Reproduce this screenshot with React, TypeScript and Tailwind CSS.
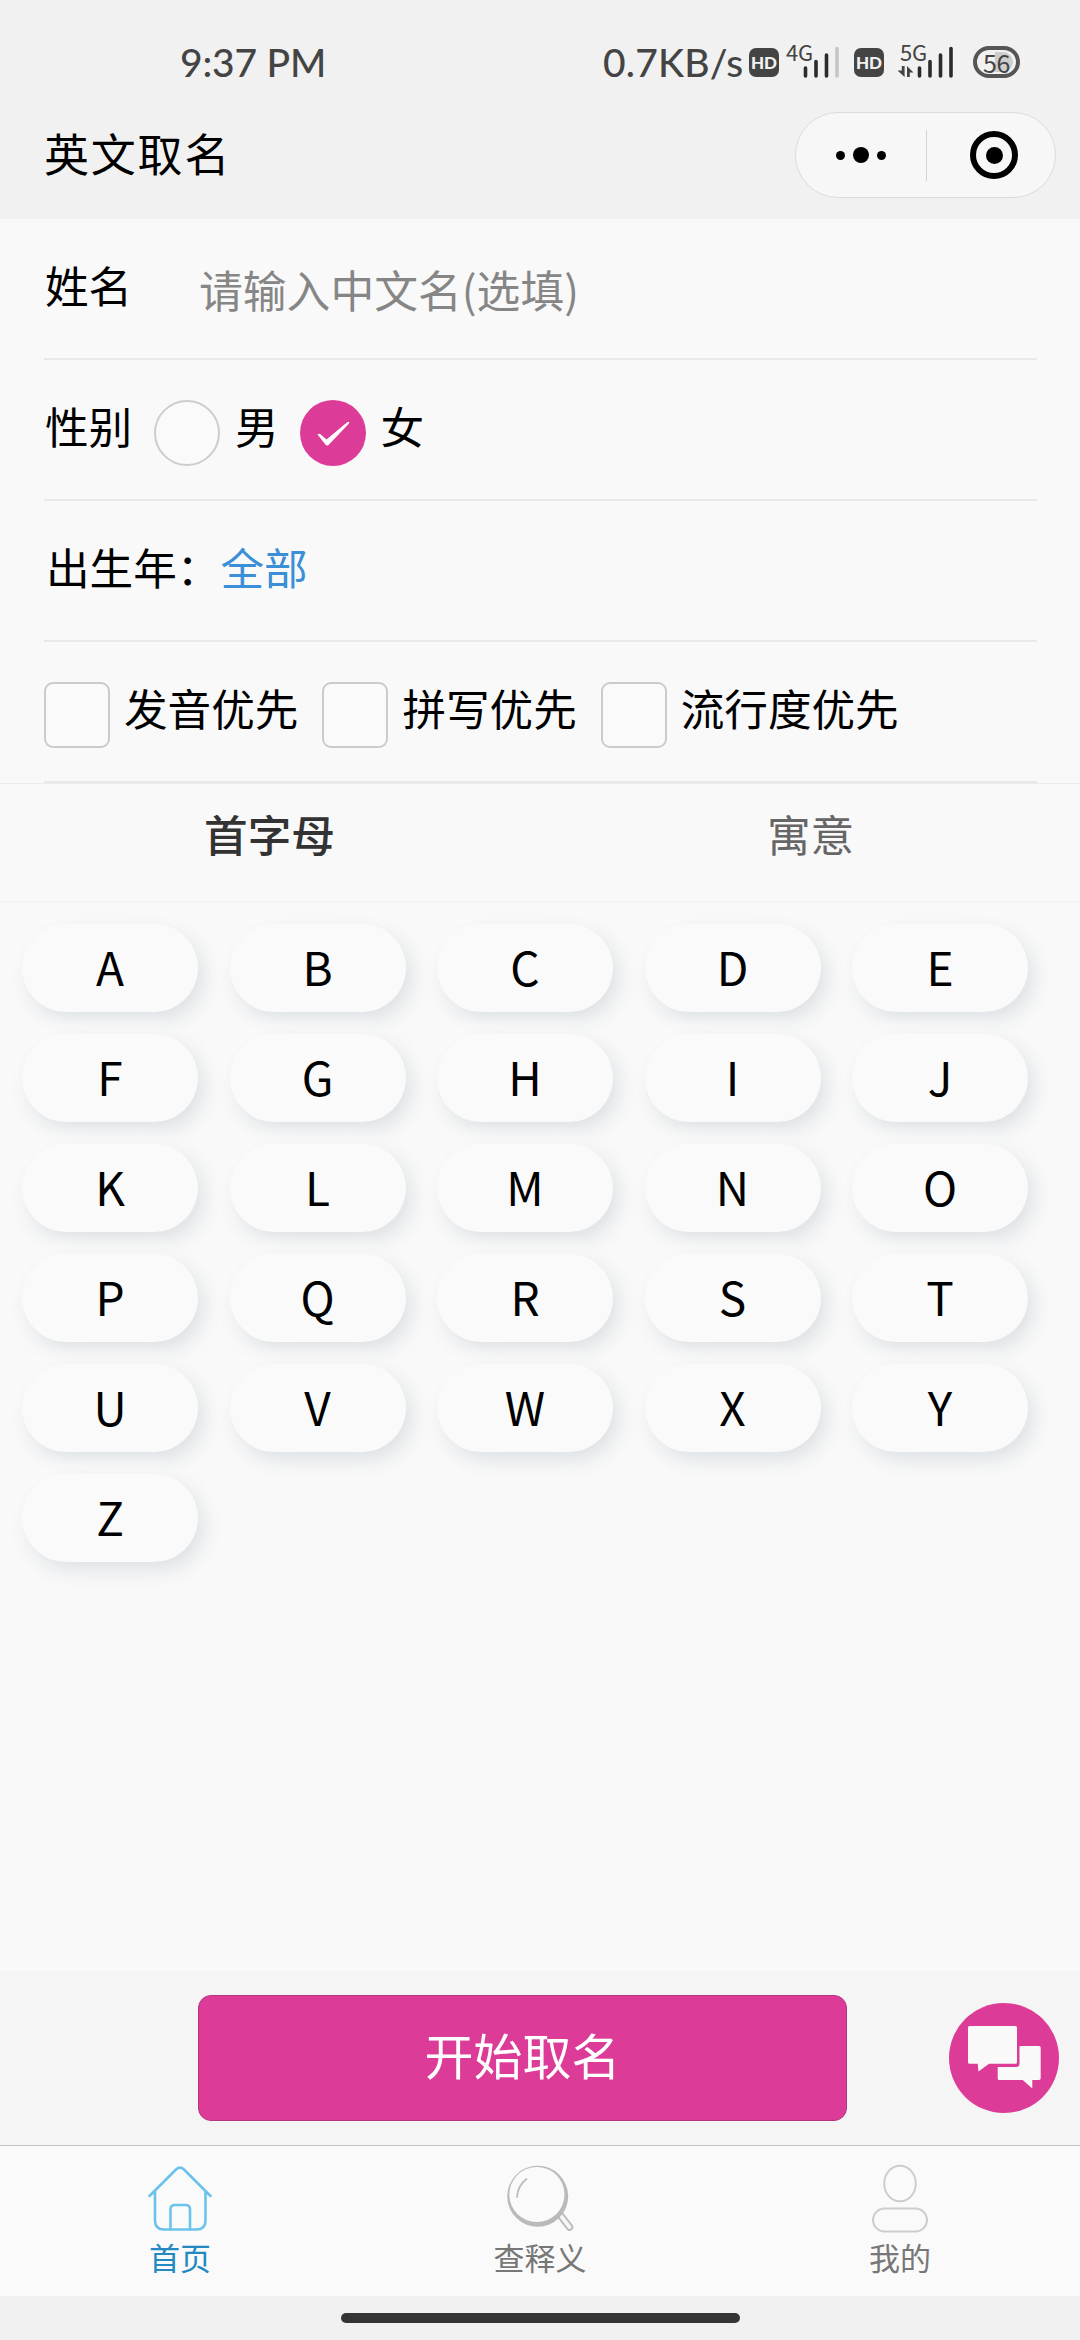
import { ReactNode, useState } from "react";
import { clsx } from "clsx";

const LETTERS = "ABCDEFGHIJKLMNOPQRSTUVWXYZ".split("");

const GENDERS = ["男", "女"];

const PRIORITIES = ["发音优先", "拼写优先", "流行度优先"];

const HdBadge = () => (
  <span className="flex h-[29px] w-[30px] items-center justify-center rounded-[7px] bg-[#444] font-['Lato'] text-[17px] leading-none font-black text-[#f1f1f1]">
    HD
  </span>
);

interface SignalProps {
  label: string;
  weak?: boolean;
  transfer?: boolean;
}

const Signal = ({ label, weak, transfer }: SignalProps) => (
  <div className="relative h-[36px] w-[56px]">
    <span className="absolute top-[-2px] left-[2px] text-[22px] leading-[20px] tracking-[-0.3px]">
      {label}
    </span>
    <svg
      className="absolute inset-0"
      width="56"
      height="36"
      viewBox="0 0 56 36"
    >
      <g stroke="#2b2b2b" strokeWidth="3.6" strokeLinecap="round">
        <path d="M21.5 25v8M32 18.5V33M42.5 12V33" />
        <path d="M53 5.5V33" stroke={weak ? "#c6c6c6" : "#2b2b2b"} />
      </g>
      {transfer && (
        <path d="M3.800 23H6.600V34L-0.500 27.500H3.800ZM9 34V23L15.500 29.500H11.800V34Z" fill="#444" />
      )}
    </svg>
  </div>
);

const StatusBar = () => (
  <div className="flex h-[112px] items-start pt-[43px] text-[#444]">
    <span className="ml-[180px] w-[423px] font-['Lato'] text-[39px] leading-[38px] font-medium tracking-[-0.2px]">
      9:37 PM
    </span>
    <span className="w-[146px] font-['Lato'] text-[39px] leading-[38px] font-medium tracking-[0.2px] whitespace-nowrap">
      0.7KB/s
    </span>
    <div className="mt-[5px]">
      <HdBadge />
    </div>
    <div className="ml-[5px]">
      <Signal label="4G" weak />
    </div>
    <div className="mt-[5px] ml-[14px]">
      <HdBadge />
    </div>
    <div className="ml-[14px]">
      <Signal label="5G" transfer />
    </div>
    <div className="mt-[3px] ml-[19px] flex h-[32px] w-[47px] items-center justify-center rounded-full border-4 border-[#555] bg-[#f1f1f1]">
      <span className="rounded-r-full bg-[linear-gradient(90deg,transparent_45%,#cdcdcd_45%)] px-[3px] text-[25px] leading-[20px] tracking-[-0.5px]">
        56
      </span>
    </div>
  </div>
);

const NavBar = () => (
  <div className="flex h-[107px] items-start justify-between pr-[24px] pl-[44px]">
    <h1 className="mt-[8px] text-[45px] leading-[66px] tracking-[1.8px] text-black">
      英文取名
    </h1>
    <div className="flex h-[86px] w-[261px] items-center rounded-full border border-[#dcdcdc] bg-[#f7f7f7]">
      <div className="flex w-[130px] items-center justify-center gap-[8px]">
        <i className="size-[9px] rounded-full bg-black" />
        <i className="size-[16px] rounded-full bg-black" />
        <i className="size-[9px] rounded-full bg-black" />
      </div>
      <div className="h-[51px] w-px bg-[#d2d2d2]" />
      <div className="flex flex-1 items-center justify-center pl-[6px]">
        <div className="flex size-[48px] items-center justify-center rounded-full border-6 border-black">
          <i className="size-[17px] rounded-full bg-black" />
        </div>
      </div>
    </div>
  </div>
);

const FormRow = ({ children }: { children: ReactNode }) => (
  <div className="mr-[43px] ml-[44px] flex h-[141px] items-start border-b-2 border-[#e9e9e9] text-[43.6px] leading-[64px] whitespace-nowrap text-black">
    {children}
  </div>
);

const HomeIcon = () => (
  <svg width="72" height="72" viewBox="0 0 72 72" fill="none">
    <g stroke="#6cc3ea" strokeWidth="2.6" strokeLinecap="round">
      <path d="M5.500 34L32 7.500Q36 3.800 40 7.500L66.500 34" />
      <path d="M11 30V58.500Q11 67.500 20 67.500H52.500Q61.500 67.500 61.500 58.500V30" />
      <path d="M26.500 67V47.500Q26.500 43 31 43H41.500Q46 43 46 47.500V67" />
    </g>
  </svg>
);

const SearchIcon = () => (
  <svg width="72" height="72" viewBox="0 0 72 72" fill="none">
    <path
      d="M55 51.500L65.500 65"
      stroke="#b9b9b9"
      strokeWidth="7.500"
      strokeLinecap="round"
    />
    <path
      d="M55 51.500L65.500 65"
      stroke="#f6f6f6"
      strokeWidth="3.800"
      strokeLinecap="round"
    />
    <circle cx="33.700" cy="34.300" r="30.500" fill="#bababa" />
    <circle cx="32.900" cy="32.500" r="27.600" fill="#fafafa" />
    <path
      d="M13 35Q13.500 24 22.500 17"
      stroke="#bdbdbd"
      strokeWidth="1.800"
      strokeLinecap="round"
    />
  </svg>
);

const UserIcon = () => (
  <svg width="72" height="72" viewBox="0 0 72 72" fill="none">
    <g stroke="#cdcdcd" strokeWidth="2">
      <ellipse cx="36" cy="21.500" rx="15.800" ry="17.800" />
      <rect x="9" y="46.500" width="54" height="23" rx="11.500" />
    </g>
  </svg>
);

const TABS = [
  { name: "首页", icon: <HomeIcon />, active: true },
  { name: "查释义", icon: <SearchIcon />, active: false },
  { name: "我的", icon: <UserIcon />, active: false },
];

const ChatIcon = () => (
  <svg width="110" height="110" viewBox="0 0 110 110" fill="#f9f9f9">
    <path d="M20.500 23H66.500Q68 23 68 24.500V59.200Q68 60.700 66.500 60.700H40L29.500 68.500L28.700 60.700H20.500Q19 60.700 19 59.200V24.500Q19 23 20.500 23Z" />
    <path d="M71.500 43H90Q91.700 43 91.700 44.700V75.300Q91.700 77 90 77H83.300V85.500L73.700 77H50.200Q48.700 77 48.700 75.500V64H67Q70.500 64 70.500 60.500V44Q70.500 43 71.500 43Z" />
  </svg>
);

export default function App() {
  const [gender, setGender] = useState("女");

  return (
    <div className="flex h-[2340px] w-[1080px] flex-col overflow-hidden bg-[#f9f9f9] font-['Noto_Sans_CJK_SC',sans-serif]">
      <header className="bg-[#f1f1f1]">
        <StatusBar />
        <NavBar />
      </header>

      <section className="border-b border-[#ebebeb]">
        <FormRow>
          <span className="mt-[33px] ml-[1px] w-[154px]">姓名</span>
          <span className="mt-[38px] text-[43.8px] text-[#868686]">
            请输入中文名(选填)
          </span>
        </FormRow>
        <FormRow>
          <span className="mt-[33px] ml-px w-[109px]">性别</span>
          {GENDERS.map((item) => (
            <label
              key={item}
              className="mr-[21px] flex items-start"
              onClick={() => setGender(item)}
            >
              <span
                className={clsx(
                  "mt-[40px] mr-[15px] flex size-[66px] items-center justify-center rounded-full",
                  gender === item
                    ? "bg-[#dc3b97]"
                    : "border-2 border-[#cdcdcd] bg-[#fafafa]"
                )}
              >
                {gender === item && (
                  <svg width="36" height="28" viewBox="0 0 36 28">
                    <path
                      d="M2.500 15.500Q4 14 5.500 15.300L11.500 20.500L32.500 3Q35 2 34 4.500L13.500 26Q12 27.300 10.600 25.800Z"
                      fill="#fff"
                    />
                  </svg>
                )}
              </span>
              <span className="mt-[33px]">{item}</span>
            </label>
          ))}
        </FormRow>
        <FormRow>
          <span className="mt-[33px] ml-[2px]">出生年：</span>
          <span className="mt-[33px] text-[#3b8fd6]">全部</span>
        </FormRow>
        <FormRow>
          {PRIORITIES.map((item) => (
            <label key={item} className="mr-[24px] flex items-start">
              <span className="mt-[40px] mr-[14px] size-[66px] rounded-[9px] border-2 border-[#cbcbcb] bg-[#fafafa]" />
              <span className="mt-[33px]">{item}</span>
            </label>
          ))}
        </FormRow>
      </section>

      <div className="flex h-[118px] border-b border-[#f3f3f3] pt-[17px] text-[43.6px] leading-[64px]">
        <div className="flex-1 text-center font-medium text-[#333]">首字母</div>
        <div className="flex-1 pl-[2px] text-center text-[#666]">寓意</div>
      </div>

      <div className="grid grid-cols-[repeat(5,176px)] gap-x-[31.500px] gap-y-[22px] pt-[22px] pl-[22px]">
        {LETTERS.map((letter) => (
          <button
            key={letter}
            className="h-[88px] rounded-full bg-[#fafafa] pb-[4px] text-[46px] leading-[84px] text-black shadow-[6px_8px_20px_#dde1e4,-6px_-6px_16px_#fbfbfb]"
          >
            {letter}
          </button>
        ))}
      </div>

      <div className="mt-auto flex h-[174px] items-center bg-[#f5f5f6] pr-[21px] pl-[198px]">
        <button className="h-[126px] w-[649px] rounded-[13px] border border-[#b5357f] bg-[#dc3b97] pb-[8px] text-[49px] leading-[116px] text-white">
          开始取名
        </button>
        <div className="ml-auto size-[110px] rounded-full bg-[#dc3b97]">
          <ChatIcon />
        </div>
      </div>

      <nav className="flex h-[151px] border-t border-[#c3c3c3] bg-[#fafafa] pt-[16px]">
        {TABS.map(({ name, icon, active }) => (
          <div key={name} className="flex flex-1 flex-col items-center">
            {icon}
            <span
              className={clsx(
                "text-[31px] leading-[46px]",
                active ? "text-[#2289c3]" : "text-[#777]"
              )}
            >
              {name}
            </span>
          </div>
        ))}
      </nav>
      <div className="flex h-[44px] justify-center bg-[#f1f1f1] pt-[17px]">
        <div className="h-[10px] w-[399px] rounded-full bg-[#353535]" />
      </div>
    </div>
  );
}
